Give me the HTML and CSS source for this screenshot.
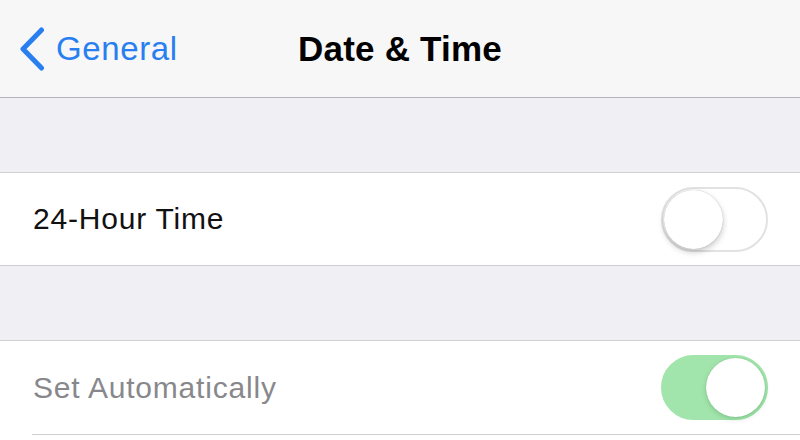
FILE: index.html
```html
<html>

<head>
    <title>Date &amp; Time</title>
    <link rel="stylesheet" href="styles.css">
</head>

<body>
    <div class="navbar">
        <div class="backlink">
            <svg class="chevron" width="26" height="44" viewBox="0 0 26 44">
                <polyline points="22.5,3 4,22 22.5,41" fill="none" stroke="#2a7ff0" stroke-width="5" stroke-linecap="round" stroke-linejoin="round" />
            </svg>
            <span>General</span>
        </div>
        <div class="title">Date &amp; Time</div>
        <div></div>
    </div>

    <div class="spacer"></div>

    <div class="row">
        <span class="label">24-Hour Time</span>
        <div class="switch"><div class="knob"></div></div>
    </div>

    <div class="spacer"></div>

    <div class="row lastrow">
        <span class="label disabled">Set Automatically</span>
        <div class="switch on"><div class="knob"></div></div>
    </div>
    <div class="inset"></div>
</body>

</html>
```

FILE: styles.css
```css
body {
    margin: 0;
    background-color: white;
    font-family: "Liberation Sans", Arial, sans-serif;
}

.navbar {
    display: grid;
    grid-template-columns: 1fr auto 1fr;
    align-items: center;
    height: 97px;
    background-color: #f7f7f8;
    border-bottom: 1px solid #b6b6ba;
}

.backlink {
    display: flex;
    align-items: center;
    gap: 11px;
    padding-left: 19px;
    color: #2a7ff0;
    font-size: 33px;
    letter-spacing: 0.6px;
}

.chevron {
    display: block;
}

.title {
    font-size: 35px;
    font-weight: bold;
    letter-spacing: 0.2px;
    color: #000;
}

.spacer {
    height: 74px;
    background-color: #efeff4;
    border-bottom: 1px solid #cfcfd3;
}

.row {
    display: flex;
    align-items: center;
    justify-content: space-between;
    height: 92px;
    padding: 0 32px 0 33px;
    border-bottom: 1px solid #cfcfd3;
}

.lastrow {
    height: 93px;
    border-bottom: none;
}

.inset {
    margin-left: 32px;
    border-bottom: 1px solid #cfcfd3;
}

.label {
    font-size: 30px;
    letter-spacing: 0.8px;
    color: #111;
}

.label.disabled {
    color: #88888c;
}

.switch {
    box-sizing: border-box;
    display: flex;
    align-items: center;
    width: 107px;
    height: 65px;
    padding: 0 1px;
    border: 2px solid #e2e2e4;
    border-radius: 33px;
    background-color: white;
}

.switch .knob {
    width: 59px;
    height: 59px;
    border-radius: 50%;
    background-color: white;
    box-shadow: 0 3px 6px rgba(0, 0, 0, 0.22), 0 0 1px rgba(0, 0, 0, 0.3);
}

.switch.on {
    justify-content: flex-end;
    background-color: #a2e5ac;
    border-color: #a2e5ac;
}

.switch.on .knob {
    box-shadow: 0 2px 5px rgba(40, 120, 60, 0.25), 0 0 1px rgba(40, 120, 60, 0.4);
}
```
